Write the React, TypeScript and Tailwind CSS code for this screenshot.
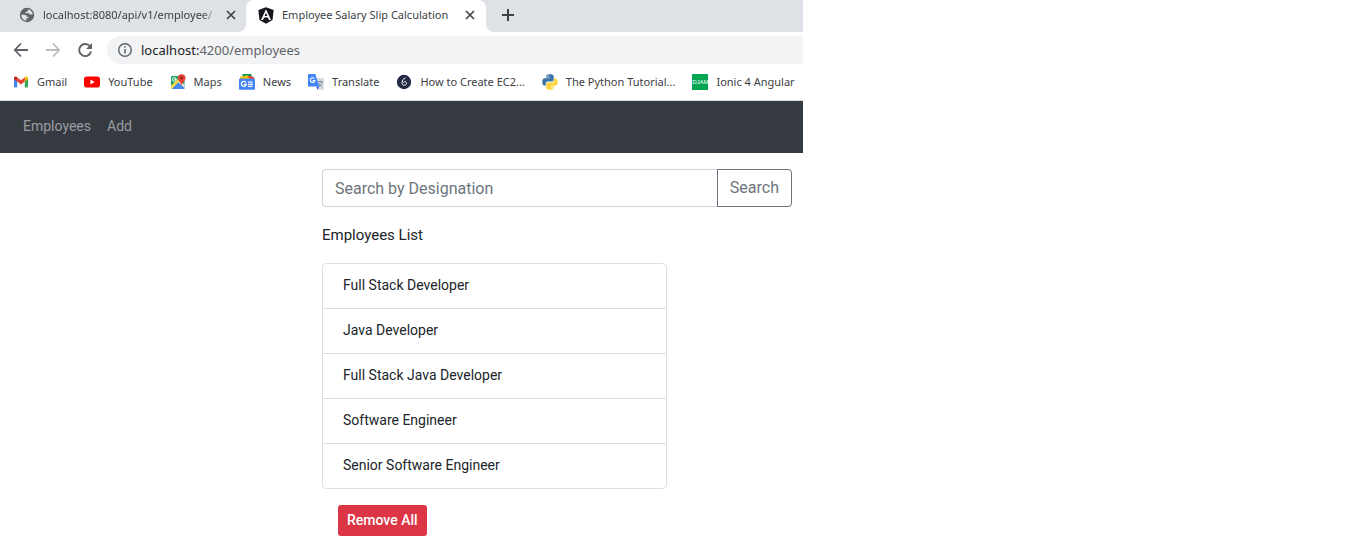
import type { ReactNode } from "react";

function GlobeIcon() {
  return (
    <svg viewBox="0 0 16 16" className="size-4 shrink-0" aria-hidden="true">
      <circle cx="8" cy="8" r="7.2" fill="#5f6368" />
      <path d="M2.300 7.800h3.200c1.400 0 2.300.7 2.300 1.900h1.600v1.600H7.300v2.500C4.400 13.500 2.200 11 2.300 7.800zM8.800 2.300c2.700.4 4.800 2.600 5 5.300h-2.500c-.8 0-1.300-.5-1.300-1.300H6.500V4.700h1.600c.5 0 .7-.3.700-.8z" fill="#dee1e6" />
    </svg>
  );
}

function AngularIcon() {
  return (
    <svg viewBox="0 0 16 17" className="h-[17px] w-4 shrink-0" aria-hidden="true">
      <path d="M8 .3 15.700 3l-1.200 10L8 16.700 1.500 13 .3 3z" fill="#15171c" />
      <path d="m8 2.200-5 10.800h2l1-2.500h4l1 2.500h2zm0 3.500 1.400 3.300H6.600z" fill="#fff" />
    </svg>
  );
}

function CloseIcon() {
  return (
    <svg viewBox="0 0 16 16" className="size-4" aria-hidden="true">
      <path d="m4 4 8 8m0-8-8 8" stroke="#3c4043" strokeWidth="1.600" fill="none" />
    </svg>
  );
}

function GmailIcon() {
  return (
    <svg viewBox="0 0 16 16" className="size-4" aria-hidden="true">
      <path d="M1 4.200v8.300c0 .6.400.9.900.9h2.300V6.700z" fill="#4285f4" />
      <path d="M15 4.200v8.300c0 .6-.4.900-.9.900h-2.300V6.700z" fill="#34a853" />
      <path d="M11.800 3.300v4.200L15 5.100V4c0-1.400-1.500-1.900-2.400-1.300z" fill="#fbbc04" />
      <path d="M4.200 3.300 8 6.200l3.800-2.900v4.200L8 10.400 4.200 7.500z" fill="#ea4335" />
      <path d="M1 4v1.100l3.200 2.400V3.300l-.8-.6C2.500 2.100 1 2.600 1 4z" fill="#c5221f" />
    </svg>
  );
}

function YouTubeIcon() {
  return (
    <svg viewBox="0 0 16 16" className="size-4" aria-hidden="true">
      <rect y="2.500" width="16" height="11" rx="2.800" fill="#f00" />
      <path d="m6.400 5.600 4.200 2.400-4.200 2.400z" fill="#fff" />
    </svg>
  );
}

function MapsIcon() {
  return (
    <svg viewBox="0 0 16 16" className="size-4" aria-hidden="true">
      <rect x="1" y="2" width="13.500" height="13" rx="1.200" fill="#1ea362" />
      <path d="M1 14.500 8.200 7.800l6.300 6.300c-.2.600-.5.900-1 .9H2z" fill="#4a89f3" />
      <path d="m1 11.800 8.500-8 2.500 5.500-3.800-1L1.800 15c-.5 0-.8-.5-.8-1z" fill="#ffd84d" />
      <path d="m8.600 8.700 2.200-2 3.700 4v3.400z" fill="#e5e7ea" />
      <circle cx="4.300" cy="5.500" r="1.900" fill="none" stroke="#fff" />
      <path d="M4.300 5.500h2.100" stroke="#fff" />
      <path d="M11.700.3a3.800 3.800 0 0 0-3.800 3.800c0 3 2.900 3.900 3.600 7.400h.4c.7-3.500 3.600-4.400 3.600-7.400A3.800 3.800 0 0 0 11.700.3z" fill="#ea4335" />
      <circle cx="11.700" cy="4" r="1.400" fill="#8c241b" />
    </svg>
  );
}

function NewsIcon() {
  return (
    <svg viewBox="0 0 16 16" className="size-4" aria-hidden="true">
      <path d="M3.500 0h9v5h-9z" fill="#0c9d58" />
      <path d="m9 1.600 6 1.500V6H8z" fill="#ea4335" />
      <path d="m.9 3 7.600-1.800L11 6H1.500z" fill="#fbbc04" />
      <rect y="4.500" width="16" height="11.300" rx="1" fill="#4285f4" />
      <path d="M7 8.500a2.500 2.500 0 1 0 .3 2H5" fill="none" stroke="#fff" strokeWidth="1.300" />
      <path d="M9 8.200h4.500M9 10.300h5M9 12.400h4.500" stroke="#fff" strokeWidth="1.200" />
    </svg>
  );
}

function TranslateIcon() {
  return (
    <svg viewBox="0 0 16 16" className="size-4" aria-hidden="true">
      <path d="M6.500 4H15c.6 0 1 .4 1 1v10c0 .6-.4 1-1 1H9.500z" fill="#dadce0" />
      <path d="M9.800 7.800h5M12.300 6.800v1M14 7.800c-.5 2.400-1.800 4-3.600 5.200M10.800 9.200c.8 1.800 2 3 3.400 3.800" fill="none" stroke="#6f8193" strokeWidth=".9" />
      <path d="M1 0h6.300l4 12.600H1c-.6 0-1-.4-1-1V1c0-.6.400-1 1-1z" fill="#4285f4" />
      <path d="m8.200 12.600 3.100 0L9.500 16z" fill="#3367d6" />
      <path d="M6.500 4.700a2.300 2.300 0 1 0 .4 1.900H4.700" fill="none" stroke="#fff" strokeWidth="1.100" />
    </svg>
  );
}

function GuideIcon() {
  return (
    <svg viewBox="0 0 16 16" className="size-4" aria-hidden="true">
      <circle cx="8" cy="8" r="7.200" fill="#252a45" />
      <path d="M9.500 4C7.500 4.500 6 6.400 6 8.600c0 1.700.9 2.700 2.300 2.700 1.300 0 2.200-.9 2.200-2 0-1-.7-1.700-1.600-1.700-.9 0-1.500.6-1.500 1.400" fill="none" stroke="#fff" strokeWidth="1" />
    </svg>
  );
}

function PythonIcon() {
  return (
    <svg viewBox="0 0 16 16" className="size-4" aria-hidden="true">
      <path d="M7.900.2C4 .2 4.300 1.900 4.300 1.900v1.800H8v.5H2.800S.3 4 .3 7.900s2.200 3.700 2.200 3.700h1.300V9.800s-.1-2.200 2.200-2.200h3.700s2 0 2-2V2.300S12 .2 7.900.2z" fill="#3b74a5" />
      <path d="M8.100 15.800c3.900 0 3.600-1.700 3.600-1.700v-1.800H8v-.5h5.200s2.500.2 2.500-3.700-2.200-3.700-2.200-3.700h-1.300v1.800s.1 2.200-2.200 2.200H6.300s-2 0-2 2v3.300s-.3 2.100 3.800 2.100z" fill="#ffd43b" />
      <circle cx="5.900" cy="2" r=".7" fill="#fff" />
      <circle cx="10.100" cy="14" r=".7" fill="#fff" />
    </svg>
  );
}

function DjamIcon() {
  return (
    <span className="flex size-4 items-center justify-center overflow-hidden bg-[#00a651] font-['Liberation_Sans',sans-serif] text-[6px] leading-none text-white">
      DJAM
    </span>
  );
}

const bookmarks: { label: string; icon: ReactNode }[] = [
  { label: "Gmail", icon: <GmailIcon /> },
  { label: "YouTube", icon: <YouTubeIcon /> },
  { label: "Maps", icon: <MapsIcon /> },
  { label: "News", icon: <NewsIcon /> },
  { label: "Translate", icon: <TranslateIcon /> },
  { label: "How to Create EC2...", icon: <GuideIcon /> },
  { label: "The Python Tutorial...", icon: <PythonIcon /> },
  { label: "Ionic 4 Angular", icon: <DjamIcon /> },
];

const employees = [
  "Full Stack Developer",
  "Java Developer",
  "Full Stack Java Developer",
  "Software Engineer",
  "Senior Software Engineer",
];

function TabStrip() {
  return (
    <div className="flex h-8 bg-white text-[#3c4043]">
      <div className="flex w-[246px] shrink-0 items-center rounded-br-lg bg-[#dee1e6] pr-[7px] pb-[2px] pl-[19px]">
        <GlobeIcon />
        <span className="ml-2 flex-1 overflow-hidden mask-r-from-90% whitespace-nowrap">
          localhost:8080/api/v1/employee/
        </span>
        <button type="button" aria-label="Close tab" className="ml-1">
          <CloseIcon />
        </button>
      </div>
      <div className="w-60 shrink-0 bg-[#dee1e6]">
        <div className="flex h-full items-center rounded-t-lg bg-white pr-2 pb-[2px] pl-3">
          <AngularIcon />
          <span className="ml-2 flex-1 whitespace-nowrap">Employee Salary Slip Calculation</span>
          <button type="button" aria-label="Close tab">
            <CloseIcon />
          </button>
        </div>
      </div>
      <div className="flex flex-1 items-center rounded-bl-lg bg-[#dee1e6] pb-[2px] pl-[14px]">
        <button type="button" aria-label="New tab">
          <svg viewBox="0 0 16 16" className="size-4" aria-hidden="true">
            <path d="M8 2v12M2 8h12" stroke="#3c4043" strokeWidth="2" />
          </svg>
        </button>
      </div>
    </div>
  );
}

function AddressBar() {
  return (
    <div className="flex h-9 items-center pl-[13px]">
      <button type="button" aria-label="Back">
        <svg viewBox="0 0 16 16" className="size-4" fill="none" stroke="#5f6368" strokeWidth="1.800" aria-hidden="true">
          <path d="M15 8H2.500M8 1.500 1.800 8 8 14.500" />
        </svg>
      </button>
      <button type="button" aria-label="Forward" className="ml-4">
        <svg viewBox="0 0 16 16" className="size-4" fill="none" stroke="#babcbe" strokeWidth="1.800" aria-hidden="true">
          <path d="M1 8h12.500M8 1.500 14.200 8 8 14.500" />
        </svg>
      </button>
      <button type="button" aria-label="Reload" className="ml-4">
        <svg viewBox="0 0 16 16" className="size-4" aria-hidden="true">
          <path d="M13 4.500A6 6 0 1 0 14 9.500" fill="none" stroke="#5f6368" strokeWidth="1.900" />
          <path d="M15 1v6H9z" fill="#5f6368" />
        </svg>
      </button>
      <div className="ml-[14px] flex h-7 flex-1 items-center rounded-l-full bg-[#f1f3f4] pl-[10px] text-[13px] text-[#5f6368]">
        <svg viewBox="0 0 16 16" className="size-4" aria-hidden="true">
          <circle cx="8" cy="8" r="6.300" fill="none" stroke="#5f6368" strokeWidth="1.400" />
          <path d="M8 7v4.500M8 4.300v1.500" stroke="#5f6368" strokeWidth="1.500" />
        </svg>
        <span className="ml-2">
          <span className="text-[#202124]">localhost:</span>4200/employees
        </span>
      </div>
    </div>
  );
}

function BookmarksBar() {
  return (
    <nav aria-label="Bookmarks" className="flex h-[33px] gap-[17px] overflow-hidden border-b border-[#d5d8dc] pb-1 pl-[13px] text-[#3c4043]">
      {bookmarks.map(({ label, icon }) => (
        <a key={label} href="#" className="flex shrink-0 items-center gap-2 whitespace-nowrap">
          {icon}
          {label}
        </a>
      ))}
    </nav>
  );
}

export default function App() {
  return (
    <div className="grid grid-cols-[803fr_554fr] bg-white">
      <div className="min-w-0">
        <header className="font-['Noto_Sans',sans-serif] text-[11px] leading-4">
          <TabStrip />
          <AddressBar />
          <BookmarksBar />
        </header>
        <div className="font-[Roboto,sans-serif] text-sm text-[#212529]">
          <nav aria-label="Main" className="flex h-[52px] items-center gap-4 bg-[#343a40] px-[23px] pb-[2px] text-[#9a9da0]">
            <a href="#">Employees</a>
            <a href="#">Add</a>
          </nav>
          <main className="grid grid-cols-[322fr_470fr_11fr] pt-4 pb-[22px]">
            <div className="col-start-2 min-w-0">
              <form className="flex h-[38px] text-base">
                <input
                  type="text"
                  aria-label="Search by Designation"
                  placeholder="Search by Designation"
                  className="min-w-0 flex-1 rounded-l border border-r-0 border-[#ced4da] px-3 pt-[2px] placeholder:text-[#6c757d]"
                />
                <button type="button" className="rounded-r border border-[#6c757d] px-3 text-[#6c757d]">
                  Search
                </button>
              </form>
              <h4 className="mt-4 text-[15px] leading-6">Employees List</h4>
              <ul className="mt-4 w-[73.4%] divide-y divide-[#dfdfdf] rounded border border-[#dfdfdf]">
                {employees.map((name) => (
                  <li key={name} className="px-5 pt-[11px] pb-[13px] leading-5">
                    {name}
                  </li>
                ))}
              </ul>
              <button type="button" className="mt-4 ml-4 h-[31px] rounded-[3px] bg-[#dc3545] px-[9px] pb-[2px] font-medium text-white">
                Remove All
              </button>
            </div>
          </main>
        </div>
      </div>
    </div>
  );
}
